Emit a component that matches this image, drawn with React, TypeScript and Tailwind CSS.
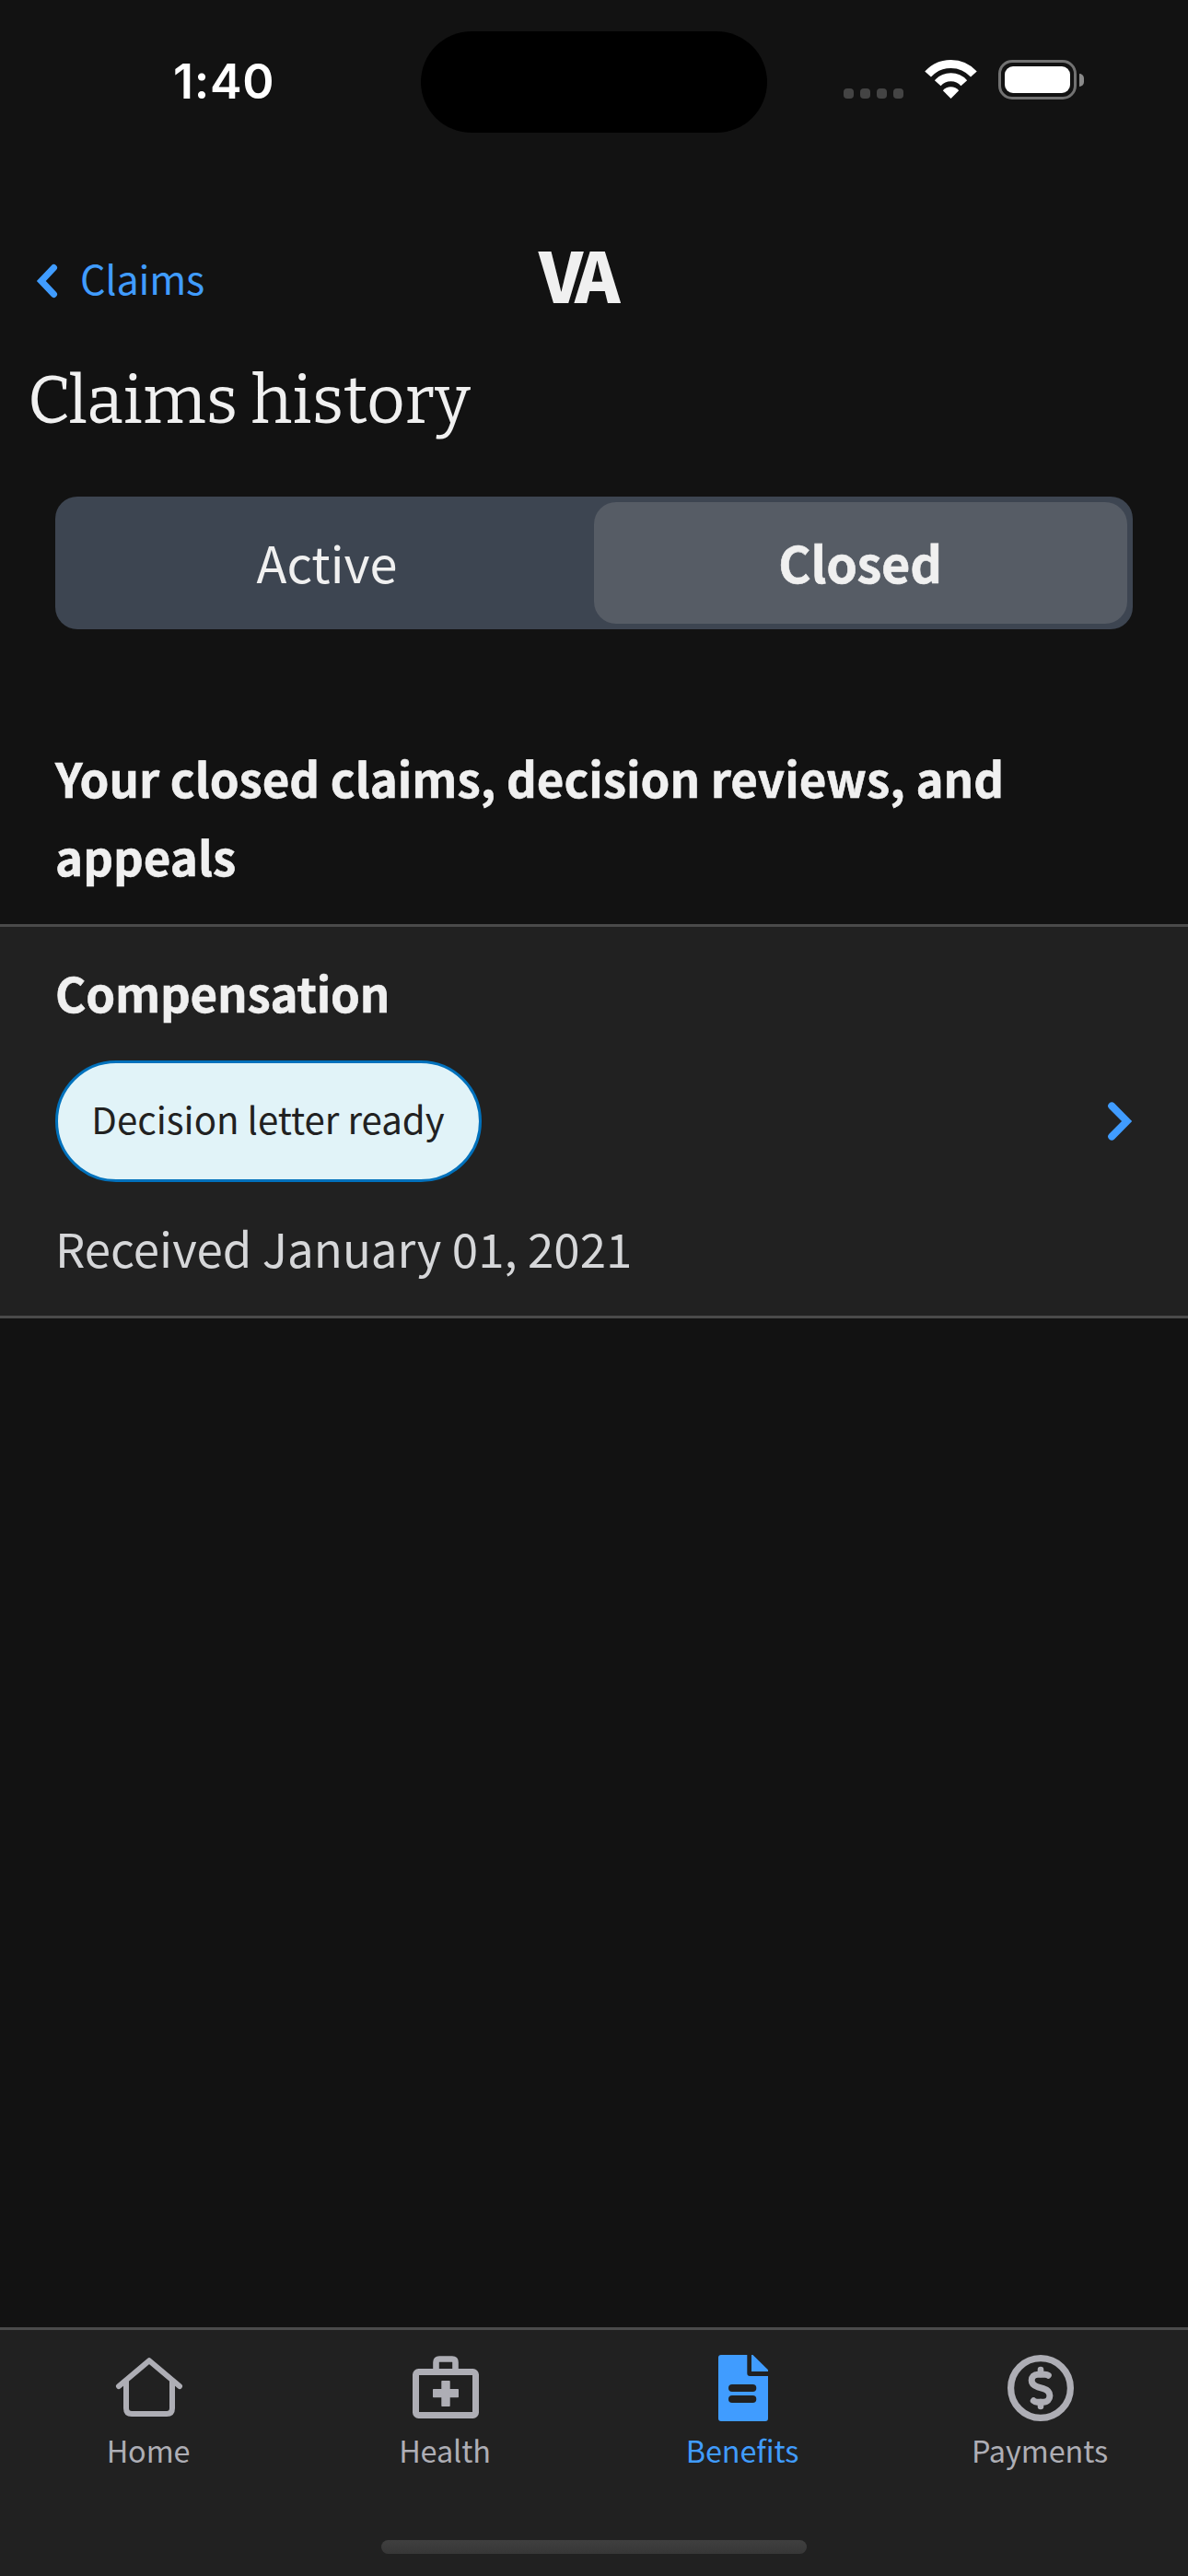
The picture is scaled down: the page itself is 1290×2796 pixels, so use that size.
import type { ReactNode } from "react";

const SANS = "font-['Noto_Sans_CJK_JP','Open_Sans',sans-serif]";

function StatusBar() {
  return (
    <div className="grid h-[144px] grid-cols-[457px_376px_1fr] pt-[34px]">
      <div className="flex items-center pl-[188px] pb-px font-['Inter',sans-serif] text-[52px] leading-none font-semibold tracking-[0.7px] text-white">
        1:40
      </div>
      <div className="rounded-full bg-black" />
      <div className="flex items-center pb-[5px] pl-[83px]">
        <div className="flex h-[43px] items-end">
          <div className="mb-[1px] flex gap-[7px]">
            {[0, 1, 2, 3].map((dot) => (
              <span key={dot} className="size-[11px] rounded-[4px] bg-[#444444]" />
            ))}
          </div>
          <svg className="ml-[22px] h-[43px] w-[59px]" viewBox="1003 65 59 43" fill="none">
            <path d="M1007.6 80.6A33.5 33.5 0 0 1 1057.4 80.6" stroke="#fff" strokeWidth="9" />
            <path d="M1018.2 90.2A19.2 19.2 0 0 1 1046.8 90.2" stroke="#fff" strokeWidth="9" />
            <path d="M1032.5 107 1023.8 98.3C1028 92.8 1037 92.8 1041.2 98.3Z" fill="#fff" />
          </svg>
          <div className="ml-[22px] flex h-[43px] items-center gap-[3px]">
            <div className="h-[43px] w-[85px] rounded-[15px] border-[3px] border-[#727272] p-1">
              <div className="h-[29px] w-[71px] rounded-[9px] bg-white" />
            </div>
            <div className="h-[14px] w-[5px] rounded-r-full bg-[#8a8a8a]" />
          </div>
        </div>
      </div>
    </div>
  );
}

function NavBar() {
  return (
    <div className="mt-[113px] grid h-[88px] grid-cols-[585px_1fr] items-center">
      <div className="flex items-center pl-[38px] text-[#409cff]">
        <svg className="mt-2 h-10 w-[26px]" viewBox="38 285 26 40" fill="none">
          <path d="M58.4 290.6 44.8 305 58.4 319.4" stroke="currentColor" strokeWidth="7.2" strokeLinecap="round" strokeLinejoin="miter" />
        </svg>
        <span className="ml-[23px] text-[43.2px] leading-[64px] tracking-[-0.2px]">Claims</span>
      </div>
      <span className="pb-2 text-[75px] leading-[76px] font-black tracking-[-7.5px] text-[#f0f0f0]">VA</span>
    </div>
  );
}

function Segments() {
  return (
    <div className="mx-[60px] mt-[60px] grid h-[144px] grid-cols-2 rounded-[24px] bg-[#3d4551] p-[6px] text-[54px] text-[#f0f0f0]">
      <div className="flex items-center justify-center pr-px pb-[3px] leading-none">Active</div>
      <div className="flex items-center justify-center rounded-[24px] bg-[#565c65] pr-px pb-[3px] leading-none font-bold tracking-[-0.2px] [-webkit-text-stroke:0.6px_#f0f0f0]">
        Closed
      </div>
    </div>
  );
}

function ClaimRow() {
  return (
    <div className="mt-[31px] flex h-[428px] items-center justify-between border-y-[3px] border-[#4a4a4a] bg-[#212121] pr-[57px] pl-[60px]">
      <div className="flex h-full flex-col items-start pt-[29px]">
        <div className="text-[51px] leading-[85px] font-bold tracking-[-0.2px] text-[#f0f0f0] [-webkit-text-stroke:0.6px_#f0f0f0]">
          Compensation
        </div>
        <div className="mt-[31px] flex h-[132px] w-[463px] items-center justify-center rounded-full border-[3px] border-[#0071bc] bg-[#e1f3f8] pr-px pb-[5px] text-[40.2px] leading-none text-[#212121]">
          Decision letter ready
        </div>
        <div className="mt-[29px] text-[51px] leading-[85px] text-[#d6d7d9]">Received January 01, 2021</div>
      </div>
      <svg className="h-12 w-8" viewBox="1201 1193 32 48" fill="none">
        <path d="M1207.2 1200.4 1223.6 1217 1207.2 1233.6" stroke="#409cff" strokeWidth="8" strokeLinecap="round" strokeLinejoin="miter" />
      </svg>
    </div>
  );
}

function Tab({ label, active, children }: { label: string; active?: boolean; children: ReactNode }) {
  return (
    <div className={`flex flex-col items-center pt-5 ${active ? "text-[#409cff]" : "text-[#aeaeb5]"}`}>
      <svg className="size-[86px]" viewBox="0 0 86 86" fill="none">
        {children}
      </svg>
      <span className="pr-[2px] text-[32.4px] leading-[48px] tracking-[-0.1px]">{label}</span>
    </div>
  );
}

function TabBar() {
  return (
    <div className="flex h-[270px] flex-col border-t-[3px] border-[#4a4a4a] bg-[#212121]">
      <div className="grid grid-cols-[324px_320px_326px_320px]">
        <Tab label="Home">
          <path d="M10 41 43 13.2 76 41" stroke="currentColor" strokeWidth="6" strokeLinecap="round" strokeLinejoin="round" />
          <path d="M18 34V65Q18 71 24 71H62Q68 71 68 65V34" stroke="currentColor" strokeWidth="6" />
        </Tab>
        <Tab label="Health">
          <rect x="10.5" y="25.5" width="65" height="47" rx="3" stroke="currentColor" strokeWidth="7" />
          <path d="M32.5 25V15Q32.5 11.5 36 11.5H50Q53.5 11.5 53.5 15V25" stroke="currentColor" strokeWidth="6.6" />
          <path d="M39 35H47Q47.7 35 47.7 35.7V44H56.3Q57 44 57 44.7V52.6Q57 53.3 56.3 53.3H47.7V62.3Q47.7 63 47 63H39Q38.3 63 38.3 62.3V53.3H29.7Q29 53.3 29 52.6V44.7Q29 44 29.7 44H38.3V35.7Q38.3 35 39 35Z" fill="currentColor" />
        </Tab>
        <Tab label="Benefits" active>
          <path d="M19 7H47.3V27Q47.3 30 50.3 30H70V76Q70 79 67 79H19Q16 79 16 76V10Q16 7 19 7Z" fill="currentColor" />
          <path d="M52 7H53.5L70 23.3V25H52Z" fill="currentColor" />
          <rect x="27" y="39" width="30.3" height="8" rx="4" fill="#212121" />
          <rect x="27" y="51" width="30.3" height="8" rx="4" fill="#212121" />
        </Tab>
        <Tab label="Payments">
          <circle cx="43" cy="43" r="32.4" stroke="currentColor" strokeWidth="7.2" />
          <path d="M51.3 29.2Q50 28.2 47.5 28.2H40C35.8 28.2 33.2 31 33.2 34.8 33.2 38.8 36 40.6 40 41.8L46 43.6C50 44.8 52.9 47 52.9 51.2 52.9 55.2 50 58.2 46 58.2H39Q36.8 58.2 35.3 56.8" stroke="currentColor" strokeWidth="7" strokeLinecap="round" />
          <path d="M43 23V28M43 58V63" stroke="currentColor" strokeWidth="6.6" strokeLinecap="round" />
        </Tab>
      </div>
      <div className="mt-[74px] h-[15px] w-[462px] self-center rounded-full bg-linear-to-b from-[#3f3f3f] to-[#373737]" />
    </div>
  );
}

export default function App() {
  return (
    <div className={`flex h-[2796px] w-[1290px] flex-col overflow-hidden bg-[#121212] ${SANS}`}>
      <StatusBar />
      <NavBar />
      <h1 className="mt-[46px] pl-[30px] font-['Bitter','DejaVu_Serif',serif] text-[72px] leading-[88px] font-normal text-[#f0f0f0]">
        Claims history
      </h1>
      <Segments />
      <h2 className="mt-[119px] px-[60px] text-[51px] leading-[85px] font-bold text-[#f0f0f0] [-webkit-text-stroke:0.6px_#f0f0f0]">
        Your closed claims, decision reviews, and appeals
      </h2>
      <ClaimRow />
      <div className="flex-1" />
      <TabBar />
    </div>
  );
}
